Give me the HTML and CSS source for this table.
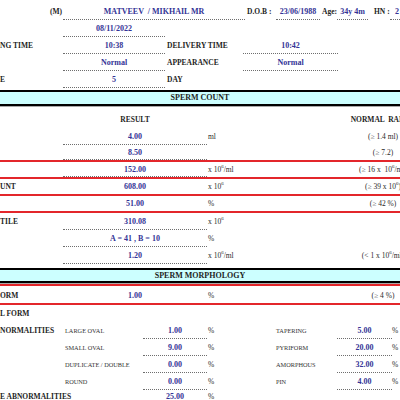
FILE: index.html
```html
<!DOCTYPE html>
<html>
<head>
<meta charset="utf-8">
<link rel="stylesheet" href="styles.css">
</head>
<body>
<div class="page">
  <section class="info">
    <div class="irow">
      <div class="lbl c-l ra">(M)</div>
      <div class="val dot" style="width:182px">MATVEEV &nbsp;/ MIKHAIL MR</div>
      <div class="lbl gap2" style="width:31px">D.O.B :</div>
      <div class="val dot" style="width:44px">23/06/1988</div>
      <div class="lbl gap2" style="width:17px">Age:</div>
      <div class="val dot" style="width:31px">34y 4m</div>
      <div class="lbl gap2 ml4" style="width:18px">HN :</div>
      <div class="val dot la" style="width:40px">2</div>
    </div>
    <div class="irow">
      <div class="lbl c-l"></div>
      <div class="val dot c-hv">08/11/2022</div>
    </div>
    <div class="irow">
      <div class="lbl c-l">NG TIME</div>
      <div class="val dot c-hv">10:38</div>
      <div class="lbl c-hl">DELIVERY TIME</div>
      <div class="val dot c-hv2">10:42</div>
    </div>
    <div class="irow">
      <div class="lbl c-l"></div>
      <div class="val dot c-hv">Normal</div>
      <div class="lbl c-hl">APPEARANCE</div>
      <div class="val dot c-hv2">Normal</div>
    </div>
    <div class="irow">
      <div class="lbl c-l">E</div>
      <div class="val dot c-hv">5</div>
      <div class="lbl c-hl">DAY</div>
    </div>
  </section>

  <div class="band band-count">SPERM COUNT</div>

  <section class="count">
    <div class="crow head">
      <div class="lbl c-l"></div>
      <div class="lbl c-v ca">RESULT</div>
      <div class="c-u"></div>
      <div class="lbl c-n nr">NORMAL &nbsp;RANGE</div>
    </div>
    <div class="crow">
      <div class="lbl c-l"></div>
      <div class="val dot c-v">4.00</div>
      <div class="unit c-u">ml</div>
      <div class="rng c-n">(≥ 1.4 ml)</div>
    </div>
    <div class="crow short">
      <div class="lbl c-l"></div>
      <div class="val dot c-v">8.50</div>
      <div class="unit c-u"></div>
      <div class="rng c-n">(≥ 7.2)</div>
    </div>
    <div class="redbox">
      <div class="crow">
        <div class="lbl c-l"></div>
        <div class="val dot c-v">152.00</div>
        <div class="unit c-u"><span>x 10<sup>6</sup>/ml</span></div>
        <div class="rng c-n"><span>(≥ 16 x &nbsp;10<sup>6</sup>/ml)</span></div>
      </div>
      <div class="crow">
        <div class="lbl c-l">UNT</div>
        <div class="val c-v">608.00</div>
        <div class="unit c-u"><span>x 10<sup>6</sup></span></div>
        <div class="rng c-n"><span>(≥ 39 x 10<sup>6</sup>)</span></div>
      </div>
      <div class="crow">
        <div class="lbl c-l"></div>
        <div class="val c-v">51.00</div>
        <div class="unit c-u">%</div>
        <div class="rng c-n">(≥ 42 %)</div>
      </div>
    </div>
    <div class="crow">
      <div class="lbl c-l">TILE</div>
      <div class="val dot c-v">310.08</div>
      <div class="unit c-u"><span>x 10<sup>6</sup></span></div>
      <div class="rng c-n"></div>
    </div>
    <div class="crow">
      <div class="lbl c-l"></div>
      <div class="val dot c-v">A = 41 , B = 10</div>
      <div class="unit c-u">%</div>
      <div class="rng c-n"></div>
    </div>
    <div class="crow">
      <div class="lbl c-l"></div>
      <div class="val dot c-v">1.20</div>
      <div class="unit c-u"><span>x 10<sup>6</sup>/ml</span></div>
      <div class="rng c-n"><span>(&lt; 1 x 10<sup>6</sup>/ml)</span></div>
    </div>
  </section>

  <div class="band band-morph">SPERM MORPHOLOGY</div>

  <section class="morph">
    <div class="redbox single">
      <div class="crow">
        <div class="lbl c-l">ORM</div>
        <div class="val c-v">1.00</div>
        <div class="unit c-u">%</div>
        <div class="rng c-n">(≥ 4 %)</div>
      </div>
    </div>
    <div class="mrow">
      <div class="lbl c-l">L FORM</div>
    </div>
    <div class="mrow">
      <div class="lbl c-l">NORMALITIES</div>
      <div class="sub c-s">LARGE OVAL</div>
      <div class="val dot c-mv">1.00</div>
      <div class="unit c-mu">%</div>
      <div class="sub c-s2">TAPERING</div>
      <div class="val dot c-mv2">5.00</div>
      <div class="unit">%</div>
    </div>
    <div class="mrow">
      <div class="lbl c-l"></div>
      <div class="sub c-s">SMALL OVAL</div>
      <div class="val dot c-mv">9.00</div>
      <div class="unit c-mu">%</div>
      <div class="sub c-s2">PYRIFORM</div>
      <div class="val dot c-mv2">20.00</div>
      <div class="unit">%</div>
    </div>
    <div class="mrow">
      <div class="lbl c-l"></div>
      <div class="sub c-s">DUPLICATE / DOUBLE</div>
      <div class="val dot c-mv">0.00</div>
      <div class="unit c-mu">%</div>
      <div class="sub c-s2">AMORPHOUS</div>
      <div class="val dot c-mv2">32.00</div>
      <div class="unit">%</div>
    </div>
    <div class="mrow">
      <div class="lbl c-l"></div>
      <div class="sub c-s">ROUND</div>
      <div class="val dot c-mv">0.00</div>
      <div class="unit c-mu">%</div>
      <div class="sub c-s2">PIN</div>
      <div class="val dot c-mv2">4.00</div>
      <div class="unit">%</div>
    </div>
    <div class="mrow last">
      <div class="lbl c-l">E ABNORMALITIES</div>
      <div class="sub c-s"></div>
      <div class="val c-mv">25.00</div>
      <div class="unit c-mu">%</div>
    </div>
  </section>
</div>
</body>
</html>
```
FILE: styles.css
```css
html, body {
  margin: 0;
  padding: 0;
  overflow: hidden;
  background: #fff;
}
body {
  font-family: "Liberation Serif", "Times New Roman", serif;
  color: #1e1e1e;
}
.page {
  width: 400px;
  padding-top: 3px;
}
.irow, .crow, .mrow {
  display: flex;
  height: 17px;
}
.irow > div, .crow > div, .mrow > div {
  flex: none;
  display: flex;
  align-items: center;
  white-space: nowrap;
  box-sizing: border-box;
}
.lbl {
  font-weight: bold;
  font-size: 7.5px;
  color: #1e1e1e;
}
.val {
  font-weight: bold;
  font-size: 8px;
  color: #343496;
  justify-content: center;
}
.la { justify-content: flex-start; padding-left: 5px; }
.ra { justify-content: flex-end; padding-right: 1px; }
.ca { justify-content: center; }
.dot { border-bottom: 1px dotted #6e6e6e; }
.c-l { width: 63px; overflow: visible; }
.gap2 { padding-left: 2px; }
.ml4 { margin-left: 4px; }
.c-hv { width: 102px; }
.c-hl { width: 78px; padding-left: 2px; }
.c-hv2 { width: 95px; }

.band {
  border-top: 2px solid #000;
  border-bottom: 2px solid #000;
  background: #ccffff;
  height: 12px;
  line-height: 12px;
  font-weight: bold;
  font-size: 8px;
  text-align: center;
  box-shadow: 0 1px 0 #a9a9a9;
}
.band-count { margin-top: 2px; }
.band-morph { margin-top: 4px; height: 11px; line-height: 11px; }

.count .head { margin-top: 5px; }
.crow.short { height: 15px; }
.c-v { width: 144px; justify-content: center; }
.c-u { width: 133px; padding-left: 1px; }
.c-n { width: 86px; justify-content: center; overflow: visible; }
.nr { font-size: 7.5px; }
.unit {
  font-size: 7.5px;
  color: #2a2a2a;
}
.rng {
  font-size: 7.5px;
  color: #2a2a2a;
}
sup {
  font-size: 5px;
  vertical-align: 4px;
  line-height: 0;
}
.redbox > .crow {
  border-bottom: 2px solid #e3262b;
  height: 15px;
}
.redbox > .crow:first-child {
  border-top: 2px solid #e3262b;
}
.redbox.single { margin-top: 1px; }
.redbox.single > .crow { height: 17px; padding-top: 2px; box-sizing: content-box; height: 15px; }

.c-s { width: 80px; padding-left: 2px; }
.sub {
  font-size: 6.3px;
  color: #333;
}
.c-mv { width: 64px; }
.c-mu { width: 69px; padding-left: 1px; }
.c-s2 { width: 61px; }
.c-mv2 { width: 55px; }
.mrow.last { border-bottom: 1px solid #9a9a9a; height: 12px; }
```
